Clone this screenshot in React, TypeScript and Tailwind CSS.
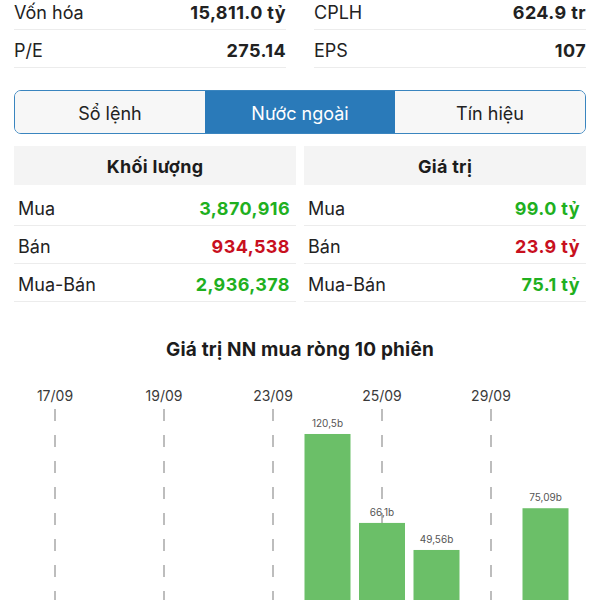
import React from 'react';

const stats = [
  { label: 'Vốn hóa', value: '15,811.0 tỷ' },
  { label: 'CPLH', value: '624.9 tr' },
  { label: 'P/E', value: '275.14' },
  { label: 'EPS', value: '107' },
];

const tabs = ['Sổ lệnh', 'Nước ngoài', 'Tín hiệu'];

type Row = { label: string; value: string; up: boolean };

const volume: Row[] = [
  { label: 'Mua', value: '3,870,916', up: true },
  { label: 'Bán', value: '934,538', up: false },
  { label: 'Mua-Bán', value: '2,936,378', up: true },
];

const amount: Row[] = [
  { label: 'Mua', value: '99.0 tỷ', up: true },
  { label: 'Bán', value: '23.9 tỷ', up: false },
  { label: 'Mua-Bán', value: '75.1 tỷ', up: true },
];

const sessions: { date?: string; value?: number; text?: string }[] = [
  { date: '17/09' },
  {},
  { date: '19/09' },
  {},
  { date: '23/09' },
  { value: 120.5, text: '120,5b' },
  { date: '25/09', value: 66.1, text: '66,1b' },
  { value: 49.56, text: '49,56b' },
  { date: '29/09' },
  { value: 75.09, text: '75,09b' },
];

function FlowTable({ title, rows }: { title: string; rows: Row[] }) {
  return (
    <div>
      <div className="h-[39px] pt-[1px] bg-[#f4f4f4] flex items-center justify-center text-[18px] font-bold tracking-[0.3px] text-[#1c1c1c]">{title}</div>
      <div className="mt-[3px]">
        {rows.map(r => (
          <div key={r.label} className="h-[38px] pt-[3px] border-b border-[#ececec] flex items-center justify-between pl-[4px] pr-[6px] text-[18px]">
            <span className="text-[#222]">{r.label}</span>
            <span className={`font-bold tracking-[0.4px] ${r.up ? 'text-[#1fb01f]' : 'text-[#c8101e]'}`}>{r.value}</span>
          </div>
        ))}
      </div>
    </div>
  );
}

function NetChart() {
  const slot = 54.5;
  const left = 27.75;
  const base = 270;
  const scale = 1.635;
  return (
    <svg width="600" height="270" className="block">
      {sessions.map((s, i) => {
        const cx = left + slot * (i + 0.5);
        return (
          <g key={i}>
            {s.date && (
              <>
                <text x={cx} y={40} textAnchor="middle" fontSize="14" fill="#3a3a3a" fontFamily="Inter, sans-serif">{s.date}</text>
                <line x1={cx} y1={48} x2={cx} y2={270} stroke="#9a9a9a" strokeWidth="1.3" strokeDasharray="12 14" />
              </>
            )}
            {s.value !== undefined && (
              <>
                <rect x={cx - 23} y={base - s.value * scale} width={46} height={s.value * scale} fill="#6bbf68" />
                <text x={cx} y={base - s.value * scale - 7} textAnchor="middle" fontSize="10" fill="#555" fontFamily="Inter, sans-serif">{s.text}</text>
              </>
            )}
          </g>
        );
      })}
    </svg>
  );
}

export default function App() {
  return (
    <div className="w-[600px] h-[600px] overflow-hidden bg-white text-[#222]" style={{ fontFamily: 'Inter, "Noto Sans", sans-serif' }}>
      <div className="-mt-[8px] px-[14px] grid grid-cols-2 gap-x-[28px]">
        {stats.map(s => (
          <div key={s.label} className="h-[38px] pt-[3px] border-b border-[#ececec] flex items-center justify-between text-[18px]">
            <span>{s.label}</span>
            <span className="font-bold tracking-[0.4px]">{s.value}</span>
          </div>
        ))}
      </div>

      <div className="mt-[22px] mx-[14px] h-[44px] grid grid-cols-3 rounded-[7px] border-[1.5px] border-[#3a85bf] overflow-hidden text-[18px]">
        {tabs.map((t, i) => (
          <div
            key={t}
            className={`flex items-center justify-center pt-[2px] ${i === 1 ? 'bg-[#2a7ab9] text-white' : 'bg-[#f7f7f7] text-[#222]'}`}
          >
            {t}
          </div>
        ))}
      </div>

      <div className="mt-[12px] px-[14px] grid grid-cols-2 gap-[8px]">
        <FlowTable title="Khối lượng" rows={volume} />
        <FlowTable title="Giá trị" rows={amount} />
      </div>

      <div className="mt-[35px] h-[24px] pt-[2px] flex items-center justify-center text-[19px] font-bold tracking-[0.2px] text-[#1c1c1c]">
        Giá trị NN mua ròng 10 phiên
      </div>
      <NetChart />
    </div>
  );
}
